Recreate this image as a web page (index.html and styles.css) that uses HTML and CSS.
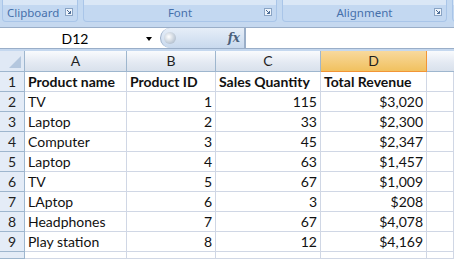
FILE: index.html
```html
<!DOCTYPE html>
<html lang="en">
<head>
    <meta charset="UTF-8">
    <title>Book1 - Excel</title>
    <link rel="stylesheet" href="styles.css">
</head>
<body>
    <div class="ribbon">
        <div class="group group-clipboard">
            <span class="group-label">Clipboard</span>
            <svg class="launcher" width="8" height="8" viewBox="0 0 8 8">
                <rect x="0.5" y="0.5" width="7" height="7" fill="#eef4fb" stroke="#8aa4c4"/>
                <path d="M2 2 L5.5 5.5 M5.5 3 V5.5 H3" fill="none" stroke="#4a6a94" stroke-width="1"/>
            </svg>
        </div>
        <div class="group group-font">
            <span class="group-label">Font</span>
            <svg class="launcher" width="8" height="8" viewBox="0 0 8 8">
                <rect x="0.5" y="0.5" width="7" height="7" fill="#eef4fb" stroke="#8aa4c4"/>
                <path d="M2 2 L5.5 5.5 M5.5 3 V5.5 H3" fill="none" stroke="#4a6a94" stroke-width="1"/>
            </svg>
        </div>
        <div class="group group-align">
            <span class="group-label">Alignment</span>
            <svg class="launcher" width="8" height="8" viewBox="0 0 8 8">
                <rect x="0.5" y="0.5" width="7" height="7" fill="#eef4fb" stroke="#8aa4c4"/>
                <path d="M2 2 L5.5 5.5 M5.5 3 V5.5 H3" fill="none" stroke="#4a6a94" stroke-width="1"/>
            </svg>
        </div>
        <div class="group group-more"></div>
    </div>

    <div class="formula-bar">
        <div class="name-box">
            <span class="name-text">D12</span>
            <span class="name-arrow"></span>
        </div>
        <div class="fx-pill">
            <span class="pill-knob"></span>
            <span class="fx">fx</span>
        </div>
        <div class="formula-input"></div>
    </div>

    <div class="sheet">
        <div class="corner"><span class="corner-tri"></span></div>
        <div class="col-head">A</div>
        <div class="col-head">B</div>
        <div class="col-head">C</div>
        <div class="col-head active">D</div>
        <div class="col-head last"></div>

        <div class="row-head">1</div>
        <div class="cell bold">Product name</div>
        <div class="cell bold">Product ID</div>
        <div class="cell bold">Sales Quantity</div>
        <div class="cell bold">Total Revenue</div>
        <div class="cell"></div>

        <div class="row-head">2</div>
        <div class="cell">TV</div>
        <div class="cell num">1</div>
        <div class="cell num">115</div>
        <div class="cell num">$3,020</div>
        <div class="cell"></div>

        <div class="row-head">3</div>
        <div class="cell">Laptop</div>
        <div class="cell num">2</div>
        <div class="cell num">33</div>
        <div class="cell num">$2,300</div>
        <div class="cell"></div>

        <div class="row-head">4</div>
        <div class="cell">Computer</div>
        <div class="cell num">3</div>
        <div class="cell num">45</div>
        <div class="cell num">$2,347</div>
        <div class="cell"></div>

        <div class="row-head">5</div>
        <div class="cell">Laptop</div>
        <div class="cell num">4</div>
        <div class="cell num">63</div>
        <div class="cell num">$1,457</div>
        <div class="cell"></div>

        <div class="row-head">6</div>
        <div class="cell">TV</div>
        <div class="cell num">5</div>
        <div class="cell num">67</div>
        <div class="cell num">$1,009</div>
        <div class="cell"></div>

        <div class="row-head">7</div>
        <div class="cell">LAptop</div>
        <div class="cell num">6</div>
        <div class="cell num">3</div>
        <div class="cell num">$208</div>
        <div class="cell"></div>

        <div class="row-head">8</div>
        <div class="cell">Headphones</div>
        <div class="cell num">7</div>
        <div class="cell num">67</div>
        <div class="cell num">$4,078</div>
        <div class="cell"></div>

        <div class="row-head">9</div>
        <div class="cell">Play station</div>
        <div class="cell num">8</div>
        <div class="cell num">12</div>
        <div class="cell num">$4,169</div>
        <div class="cell"></div>

        <div class="row-head"></div>
        <div class="cell"></div>
        <div class="cell"></div>
        <div class="cell"></div>
        <div class="cell"></div>
        <div class="cell"></div>
    </div>
</body>
</html>
```

FILE: styles.css
```css
* {
    margin: 0;
    padding: 0;
    box-sizing: border-box;
}

html, body {
    width: 454px;
    height: 259px;
    overflow: hidden;
}

body {
    background: #c5d8ef;
    font-family: Lato, "Open Sans", sans-serif;
}

/* ribbon */

.ribbon {
    display: flex;
    height: 22px;
    gap: 5px;
    padding-left: 2px;
    background: #c4d9f1;
}

.group {
    position: relative;
    flex-shrink: 0;
    height: 22px;
    border: 1px solid #a9c5e8;
    border-top: none;
    border-radius: 0 0 4px 4px;
    background: linear-gradient(#dae7f6 0, #dae7f6 5px, #c3d8f1 5px, #c3d8f1);
    display: flex;
    align-items: flex-end;
    padding-bottom: 1px;
}

.group-clipboard { width: 76px; padding-left: 4px; }
.group-font { width: 194px; justify-content: center; }
.group-align { width: 165px; justify-content: center; }
.group-more { width: 20px; }

.group-label {
    font-family: "Noto Sans", sans-serif;
    font-size: 11.5px;
    color: #4670ab;
    line-height: 15px;
}

.launcher {
    position: absolute;
    right: 4px;
    bottom: 5px;
}

/* formula bar */

.formula-bar {
    display: flex;
    height: 22px;
    margin-top: 5px;
    background: #fff;
    border-top: 1px solid #9aaec8;
    border-bottom: 1px solid #9aaec8;
}

.name-box {
    width: 158px;
    display: flex;
    align-items: center;
    position: relative;
}

.name-text {
    flex: 1;
    text-align: center;
    font-size: 14px;
    color: #000;
    padding-right: 8px;
}

.name-arrow {
    position: absolute;
    right: 6px;
    top: 9px;
    border-left: 3px solid transparent;
    border-right: 3px solid transparent;
    border-top: 4px solid #000;
}

.fx-pill {
    width: 85px;
    margin-left: 2px;
    border: 1px solid #9aaec8;
    border-top: none;
    border-bottom: none;
    border-radius: 10px 0 0 10px;
    background: linear-gradient(#e6eef8, #c8d9ee);
    display: flex;
    align-items: center;
    justify-content: space-between;
    padding: 0 4px 0 3px;
}

.pill-knob {
    width: 12px;
    height: 12px;
    border-radius: 50%;
    background: radial-gradient(circle at 40% 40%, #ffffff, #b8c4d2 70%);
}

.fx {
    font-family: "DejaVu Serif", serif;
    font-style: italic;
    font-weight: bold;
    font-size: 12px;
    color: #4a5f7a;
}

.formula-input {
    flex: 1;
    border-left: 1px solid #9aaec8;
    background: #fff;
}

/* sheet */

.sheet {
    margin-top: 2px;
    display: grid;
    grid-template-columns: 25px 102px 89px 105px 106px 1fr;
    grid-template-rows: 21px repeat(9, 20px) 7px;
    background: #fff;
    font-size: 14px;
    color: #111;
}

.corner {
    background: #e0e9f5;
    border-right: 1px solid #9eb6ce;
    border-bottom: 1px solid #9eb6ce;
    position: relative;
}

.corner-tri {
    position: absolute;
    right: 3px;
    bottom: 3px;
    border-left: 12px solid transparent;
    border-bottom: 12px solid #b4c7de;
}

.col-head {
    background: linear-gradient(#f9fbfd, #e3e9f2 60%, #d9e1ec);
    border-right: 1px solid #9eb6ce;
    border-bottom: 1px solid #9eb6ce;
    text-align: center;
    line-height: 20px;
    color: #1f1f1f;
}

.col-head.active {
    background: linear-gradient(#f8d99d, #f1c15f);
    border-right: 1px solid #f29536;
    border-bottom: 1px solid #f29536;
}

.col-head.last {
    border-right: none;
}

.row-head {
    background: #e4ecf7;
    border-right: 1px solid #9eb6ce;
    border-bottom: 1px solid #9eb6ce;
    text-align: center;
    line-height: 19px;
    color: #1f1f1f;
}

.cell {
    border-right: 1px solid #d0d7e5;
    border-bottom: 1px solid #d0d7e5;
    padding: 0 3px;
    line-height: 20px;
    white-space: nowrap;
    overflow: hidden;
}

.cell.bold {
    font-weight: bold;
}

.cell.num {
    text-align: right;
}
```
